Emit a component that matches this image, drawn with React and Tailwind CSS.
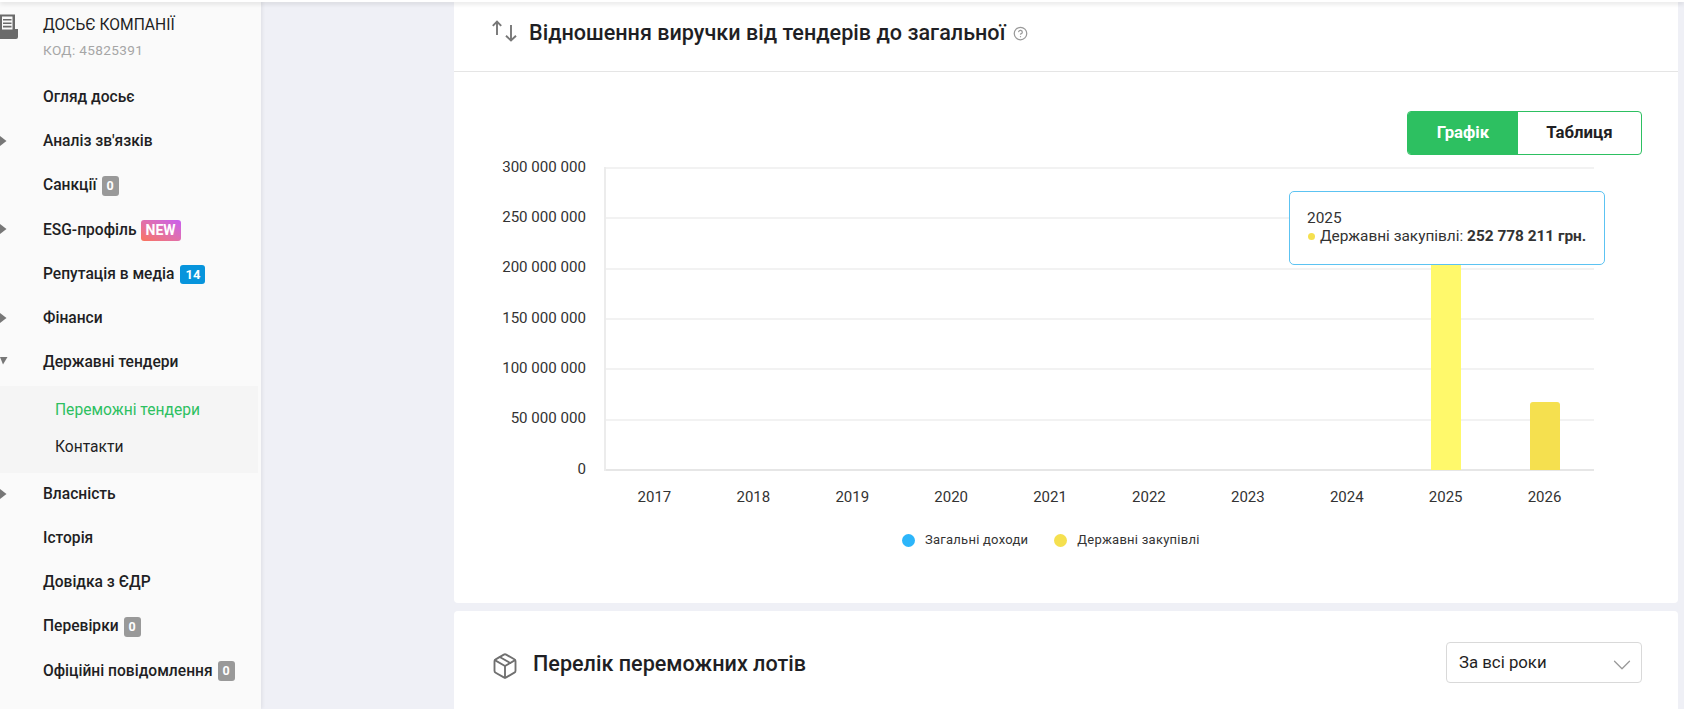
import React from "react";
import { ChevronDown, CircleHelp, Package } from "lucide-react";

const menuTop = [
  { label: "Огляд досьє" },
  { label: "Аналіз зв'язків", arrow: "right" },
  { label: "Санкції", badge: "0" },
  { label: "ESG-профіль", arrow: "right", isNew: true },
  { label: "Репутація в медіа", badge: "14", blue: true },
  { label: "Фінанси", arrow: "right" },
  { label: "Державні тендери", arrow: "down" },
];

const menuBottom = [
  { label: "Власність", arrow: "right" },
  { label: "Історія" },
  { label: "Довідка з ЄДР" },
  { label: "Перевірки", badge: "0" },
  { label: "Офіційні повідомлення", badge: "0" },
];

const ticks = ["300 000 000", "250 000 000", "200 000 000", "150 000 000", "100 000 000", "50 000 000", "0"];
const years = ["2017", "2018", "2019", "2020", "2021", "2022", "2023", "2024", "2025", "2026"];

const MenuRow = ({ item }) => (
  <div className="flex items-center h-[44.2px]">
    <div className="w-[43px] shrink-0">
      {item.arrow === "right" && (
        <svg width="7" height="10" viewBox="0 0 7 10" className="-mt-[2px]">
          <path d="M0 0 L6.5 5 L0 10 Z" fill="#777" />
        </svg>
      )}
      {item.arrow === "down" && (
        <svg width="8" height="8" viewBox="0 0 8 8" className="-mt-[3px]">
          <path d="M0 0 L7.5 0 L3 7.5 Z" fill="#777" />
        </svg>
      )}
    </div>
    <span className="text-[15.6px] font-medium text-[#1f1f24] whitespace-nowrap">{item.label}</span>
    {item.badge && (
      <span
        className={
          item.blue
            ? "ml-[6px] h-[19px] w-[25px] justify-center rounded-[3px] bg-[#0794dc] text-white text-[13px] font-bold flex items-center"
            : "ml-[5px] h-[20px] w-[17px] justify-center rounded-[3px] bg-[#999999] text-white text-[12.5px] font-bold flex items-center"
        }
      >
        {item.badge}
      </span>
    )}
    {item.isNew && (
      <span className="ml-[4px] h-[21px] w-[40px] justify-center rounded-[3px] bg-gradient-to-tr from-[#fb7358] to-[#c95cf0] text-white text-[14px] font-bold flex items-center">
        NEW
      </span>
    )}
  </div>
);

const Sidebar = () => (
  <aside className="relative w-[261px] shrink-0 bg-[#fafafa] overflow-hidden shadow-[1px_0_4px_rgba(0,0,0,0.08)]">
    {/* Company head */}
    <div className="flex h-[75.6px] pt-[15px]">
      <div className="w-[43px] shrink-0">
        <svg width="18" height="26" viewBox="0 0 18 26" className="-mt-[1px]">
          <path d="M0 0.5 H15 V15 H18 V23 Q18 25 16 25 H0 Z" fill="#6a6a6a" />
          <path d="M2 2.5 H12.5 V15.5 H2 Z" fill="#fafafa" />
          <path d="M3 5 H11.5 V6.6 H3 Z M3 8.4 H11.5 V10 H3 Z M3 11.8 H11.5 V13.4 H3 Z" fill="#6a6a6a" />
        </svg>
      </div>
      <div>
        <div className="text-[15.6px] leading-[20px] text-[#1f1f24]">ДОСЬЄ КОМПАНІЇ</div>
        <div className="text-[13.6px] leading-[16px] mt-[7px] tracking-[0.35px] text-[#a6a6a6]">КОД: 45825391</div>
      </div>
    </div>

    {menuTop.map((item) => (
      <MenuRow key={item.label} item={item} />
    ))}

    {/* Sub menu */}
    <div className="w-[258px] h-[87px] mt-[1px] mb-[-0.5px] bg-[#f5f5f5] pl-[55px] pt-[7px] text-[15.6px]">
      <div className="h-[36px] flex items-center text-[#2dc061]">Переможні тендери</div>
      <div className="h-[37px] flex items-center text-[#1f1f24]">Контакти</div>
    </div>

    {menuBottom.map((item) => (
      <MenuRow key={item.label} item={item} />
    ))}
  </aside>
);

const Chart = () => (
  <div className="relative h-[421px]">
    {/* Toggle */}
    <div className="flex justify-end pr-[36px] pt-[39px]">
      <div className="flex w-[235px] h-[44px] rounded-[4px] border border-[#2dc061] overflow-hidden text-[16.8px] font-bold">
        <div className="w-[110px] bg-[#2dc061] text-white flex items-center justify-center">Графік</div>
        <div className="flex-1 text-[#1f1f24] flex items-center justify-center">Таблиця</div>
      </div>
    </div>

    {/* Plot */}
    <div className="relative mt-[12px] h-[304px] flex flex-col justify-between">
      {ticks.map((tick, i) => (
        <div key={tick} className="flex items-center h-[2px]">
          <span className="w-[132px] text-right text-[15.1px] text-[#333333] whitespace-nowrap -mt-[2px]">{tick}</span>
          <div className={i === 6 ? "ml-[19px] w-[989px] h-[2px] bg-[#e6e6e6]" : "ml-[19px] w-[989px] h-[2px] bg-[#f2f2f2]"} />
        </div>
      ))}
      <div className="absolute left-[150px] top-0 bottom-0 w-[2px] bg-[#ececec]" />
      {/* Bars */}
      <div className="absolute left-[151px] w-[989px] top-0 h-[303px] grid grid-cols-10 items-end justify-items-center">
        {years.map((y) => (
          <div key={y} className="w-[30px] flex items-end h-full">
            {y === "2025" && <div className="w-[30px] h-[256px] bg-[#fff96b] rounded-t-[3px]" />}
            {y === "2026" && <div className="w-[30px] h-[68px] bg-[#f5e04f] rounded-t-[3px]" />}
          </div>
        ))}
      </div>
    </div>

    {/* Years */}
    <div className="ml-[151px] w-[989px] grid grid-cols-10 mt-[14px] text-[15px] leading-[24px] text-[#333333] text-center">
      {years.map((y) => (
        <span key={y}>{y}</span>
      ))}
    </div>

    {/* Legend */}
    <div className="flex items-center mt-[21px] ml-[448px] text-[13px] tracking-[0.25px] text-[#333333] leading-[20px]">
      <span className="w-[13px] h-[13px] rounded-full bg-[#2cb5fa]" />
      <span className="ml-[10px]">Загальні доходи</span>
      <span className="ml-[26px] w-[13px] h-[13px] rounded-full bg-[#f5e04f]" />
      <span className="ml-[10px]">Державні закупівлі</span>
    </div>

    {/* Tooltip */}
    <div className="absolute left-[835px] top-[119px] w-[316px] h-[74px] rounded-[5px] border border-[#5cc3f2] bg-white pl-[17px] pt-[17px] text-[15.4px] leading-[18px] text-[#333333]">
      <div>2025</div>
      <div className="flex items-center whitespace-nowrap">
        <span className="w-[7px] h-[7px] ml-[1px] mr-[5px] rounded-full bg-[#f5e04f]" />
        <span>
          Державні закупівлі: <b className="font-bold">252 778 211 грн.</b>
        </span>
      </div>
    </div>
  </div>
);

const App = () => (
  <div className="relative flex h-[709px] w-[1684px] overflow-hidden bg-[#eff0f6] font-['Roboto',sans-serif]">
    <Sidebar />

    <main className="flex-1 pl-[193px] pr-[6px]">
      <section className="h-[603px] bg-white rounded-b-[4px]">
        <div className="h-[72px] border-b border-[#e5e5e5] flex items-center pl-[38px] pb-[5px]">
          <svg width="25" height="22" viewBox="0 0 25 22" className="-mt-[5px]" fill="none" stroke="#777777" strokeWidth="1.9">
            <path d="M5 15 V1.5 M0.8 5.8 L5 1.5 L9.2 5.8" />
            <path d="M19 5 V20.5 M14 15.8 L19 20.5 L24 15.8" />
          </svg>
          <h2 className="ml-[12px] text-[21.6px] font-medium text-[#1f1f24] whitespace-nowrap">
            Відношення виручки від тендерів до загальної
          </h2>
          <CircleHelp size={15} color="#999999" className="ml-[8px]" />
        </div>
        <Chart />
      </section>

      <section className="mt-[8px] h-[120px] bg-white rounded-t-[4px] flex items-start pl-[37px] pr-[36px] pt-[31px]">
        <Package size={28} color="#707070" strokeWidth={1.6} className="mt-[10px]" />
        <h2 className="ml-[14px] mt-[6px] text-[21.6px] font-medium text-[#1f1f24]">Перелік переможних лотів</h2>
        <div className="ml-auto w-[196px] h-[41px] rounded-[4px] border border-[#d9d9d9] flex items-center justify-between pl-[12px] pr-[4px] text-[16.8px] text-[#1f1f24]">
          <span>За всі роки</span>
          <ChevronDown size={30} color="#999999" strokeWidth={1} className="mt-[5px]" />
        </div>
      </section>
    </main>

    {/* top bar shadow */}
    <div className="absolute top-0 left-0 right-0 h-[2px] bg-white shadow-[0_1px_5px_rgba(0,0,0,0.22)]" />
  </div>
);

export default App;
